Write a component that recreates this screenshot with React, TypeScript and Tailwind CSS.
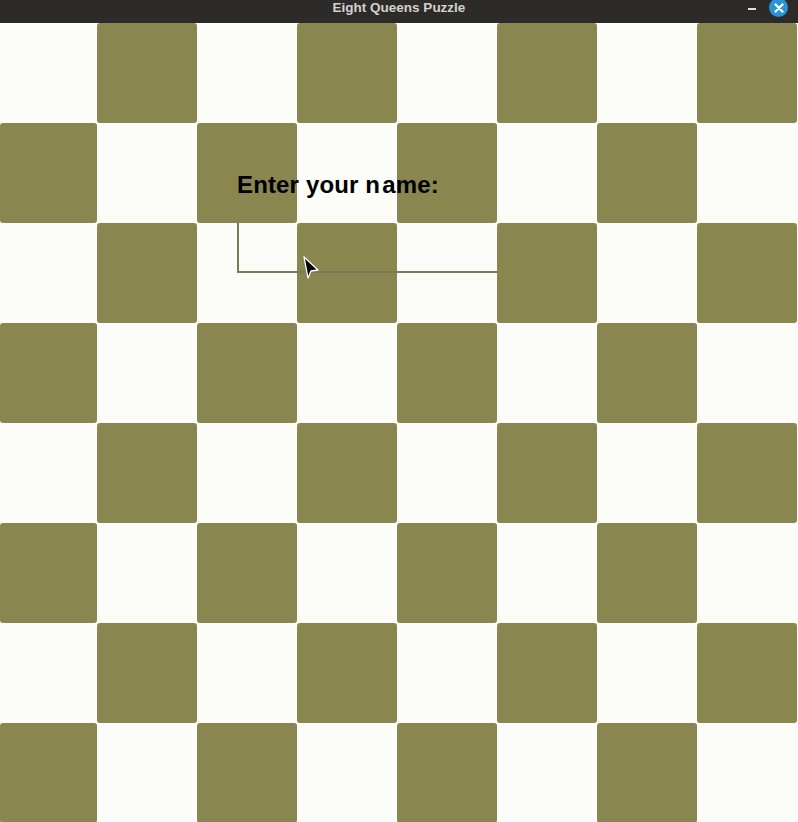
import React from 'react';

const rows = [0, 1, 2, 3, 4, 5, 6, 7];
const cols = [0, 1, 2, 3, 4, 5, 6, 7];

const App = () => {
  return (
    <div className="w-[798px] h-[822px] overflow-hidden bg-[#fcfcf8] flex flex-col">
      {/* window title bar */}
      <div className="h-[23px] shrink-0 bg-[#2c2b29] relative flex items-center justify-center">
        <span
          className="text-[13.5px] font-bold text-[#d3d2cd] leading-none -mt-[7px]"
          style={{ fontFamily: '"Liberation Sans", Arial, sans-serif' }}
        >
          Eight Queens Puzzle
        </span>
        <div className="absolute right-[42px] top-[8px] w-[8px] h-[1.5px] bg-[#e0e0e0]" />
        <div className="absolute right-[10px] top-[-2px] w-[19px] h-[19px] rounded-full bg-[#2a93d5] flex items-center justify-center">
          <svg width="10" height="10" viewBox="0 0 10 10">
            <path d="M1.5 1.5 L8.5 8.5 M8.5 1.5 L1.5 8.5" stroke="#ffffff" strokeWidth="2.2" strokeLinecap="round" />
          </svg>
        </div>
      </div>

      {/* board */}
      <div className="relative flex-1">
        <div className="grid grid-cols-[97px_repeat(7,100px)] grid-rows-[repeat(8,100px)]">
          {rows.map((r) =>
            cols.map((c) => (
              <div
                key={`${r}-${c}`}
                className={(r + c) % 2 === 1 ? 'bg-[#8a8650] rounded-[3px]' : 'bg-[#fcfcf8]'}
              />
            ))
          )}
        </div>

        {/* name prompt, drawn over the board */}
        <div className="absolute left-[237px] top-[150px] flex flex-col gap-[26px]">
          <div
            className="text-[24px] font-bold leading-none tracking-[0.15px] text-black"
            style={{ fontFamily: '"Liberation Sans", Arial, sans-serif' }}
          >
            Enter your n<span className="ml-[2px]">ame:</span>
          </div>
          <input
            type="text"
            className="w-[260px] h-[50px] bg-transparent border-l-2 border-b-2 border-[#7d7a55] outline-none"
          />
        </div>

        {/* mouse pointer */}
        <svg className="absolute left-[300px] top-[232px]" width="24" height="26" viewBox="0 0 24 26">
          <path d="M4 2 L18 15 L11 16 L8 23 Z" fill="#000000" stroke="#ffffff" strokeWidth="1.3" strokeLinejoin="round" />
        </svg>
      </div>
    </div>
  );
};

export default App;
